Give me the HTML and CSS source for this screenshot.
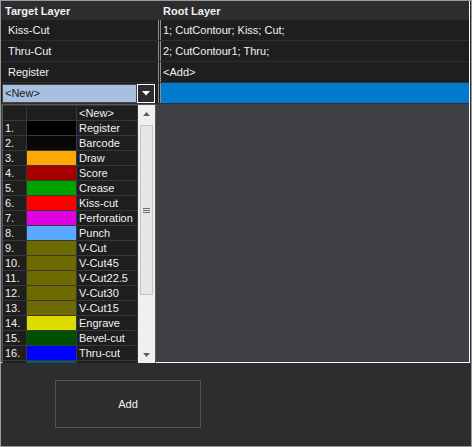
FILE: index.html
```html
<!DOCTYPE html>
<html>
<head>
<meta charset="utf-8">
<link rel="stylesheet" href="styles.css">
</head>
<body>
<div class="window">
  <div class="grid">
    <div class="row header">
      <div class="c1">Target Layer</div>
      <div class="c2">Root Layer</div>
    </div>
    <div class="row">
      <div class="c1">Kiss-Cut</div>
      <div class="c2">1; CutContour; Kiss; Cut;</div>
    </div>
    <div class="row">
      <div class="c1">Thru-Cut</div>
      <div class="c2">2; CutContour1; Thru;</div>
    </div>
    <div class="row">
      <div class="c1">Register</div>
      <div class="c2">&lt;Add&gt;</div>
    </div>
    <div class="row new">
      <div class="c1">
        <div class="combo">
          <div class="combo-field">&lt;New&gt;</div>
          <div class="combo-btn"><svg width="8" height="5" viewBox="0 0 8 5"><polygon points="0,0 8,0 4,4.5" fill="#ffffff"/></svg></div>
        </div>
      </div>
      <div class="c2 selected"></div>
    </div>

    <div class="dropdown">
      <div class="items">
        <div class="item"><div class="num"></div><div class="sw"></div><div class="name">&lt;New&gt;</div></div>
        <div class="item"><div class="num">1.</div><div class="sw c-register"></div><div class="name">Register</div></div>
        <div class="item"><div class="num">2.</div><div class="sw c-barcode"></div><div class="name">Barcode</div></div>
        <div class="item"><div class="num">3.</div><div class="sw c-draw"></div><div class="name">Draw</div></div>
        <div class="item"><div class="num">4.</div><div class="sw c-score"></div><div class="name">Score</div></div>
        <div class="item"><div class="num">5.</div><div class="sw c-crease"></div><div class="name">Crease</div></div>
        <div class="item"><div class="num">6.</div><div class="sw c-kiss"></div><div class="name">Kiss-cut</div></div>
        <div class="item"><div class="num">7.</div><div class="sw c-perf"></div><div class="name">Perforation</div></div>
        <div class="item"><div class="num">8.</div><div class="sw c-punch"></div><div class="name">Punch</div></div>
        <div class="item"><div class="num">9.</div><div class="sw c-vcut"></div><div class="name">V-Cut</div></div>
        <div class="item"><div class="num">10.</div><div class="sw c-vcut"></div><div class="name">V-Cut45</div></div>
        <div class="item"><div class="num">11.</div><div class="sw c-vcut"></div><div class="name">V-Cut22.5</div></div>
        <div class="item"><div class="num">12.</div><div class="sw c-vcut"></div><div class="name">V-Cut30</div></div>
        <div class="item"><div class="num">13.</div><div class="sw c-vcut"></div><div class="name">V-Cut15</div></div>
        <div class="item"><div class="num">14.</div><div class="sw c-engrave"></div><div class="name">Engrave</div></div>
        <div class="item"><div class="num">15.</div><div class="sw c-bevel"></div><div class="name">Bevel-cut</div></div>
        <div class="item"><div class="num">16.</div><div class="sw c-thru"></div><div class="name">Thru-cut</div></div>
        <div class="item"><div class="num"></div><div class="sw c-17"></div><div class="name"></div></div>
      </div>
      <div class="scroll">
        <div class="arrow"><svg width="7" height="4" viewBox="0 0 7 4"><polygon points="3.5,0 7,4 0,4" fill="#606060"/></svg></div>
        <div class="thumb"><svg width="7" height="5" viewBox="0 0 7 5"><rect x="0" y="0" width="7" height="1" fill="#6d6d6d"/><rect x="0" y="2" width="7" height="1" fill="#6d6d6d"/><rect x="0" y="4" width="7" height="1" fill="#6d6d6d"/></svg></div>
        <div class="arrow bottom"><svg width="7" height="4" viewBox="0 0 7 4"><polygon points="0,0 7,0 3.5,4" fill="#606060"/></svg></div>
      </div>
    </div>
  </div>
  <div class="footer">
    <button class="add">Add</button>
  </div>
</div>
</body>
</html>
```

FILE: styles.css
```css
* { box-sizing: border-box; }

body {
  margin: 0;
  background: #2d2d30;
  font-family: "Liberation Sans", Arial, sans-serif;
  font-size: 11px;
  color: #f1f1f1;
}

.window {
  width: 472px;
  height: 447px;
  border: 1px solid #9a9a9a;
  background: #2d2d30;
  display: flex;
  flex-direction: column;
}

.grid {
  position: relative;
  flex: none;
  height: 362px;
  margin-right: 1px;
  background: #3f3f46;
  border-right: 1px solid #ffffff;
  border-bottom: 1px solid #ffffff;
}

.row {
  display: flex;
  height: 21px;
  background: #1e1e1e;
  border-bottom: 1px solid #2f2f2f;
}

.row.header {
  height: 19px;
  background: #2d2d30;
  border-bottom: none;
  font-weight: bold;
  font-size: 11px;
}

.c1 {
  width: 158px;
  padding-left: 7px;
  display: flex;
  align-items: center;
  border-right: 1px solid #8d8d8d;
}

.c2 {
  flex: 1;
  margin-left: 1px;
  padding-left: 2px;
  display: flex;
  align-items: center;
  border-left: 1px solid #8d8d8d;
}

.header .c1 {
  padding-left: 4px;
  border-right-color: transparent;
}

.header .c2 {
  border-left-color: transparent;
}

.new .c1 {
  padding-left: 0;
  align-items: flex-start;
}

.selected {
  background: #007acc;
}

.combo {
  display: flex;
  margin: 1px 0 0 1px;
  width: 153px;
  height: 19px;
}

.combo-field {
  flex: 1;
  background: #a8c0df;
  border: 1px solid #454545;
  color: #1b1b1b;
  padding-left: 2px;
  line-height: 16px;
}

.combo-btn {
  width: 18px;
  border: 1px solid #ffffff;
  background: #2d2d30;
  display: flex;
  align-items: center;
  justify-content: center;
}

.dropdown {
  position: absolute;
  left: 1px;
  top: 103px;
  width: 154px;
  height: 259px;
  display: flex;
  overflow: hidden;
  z-index: 2;
  background: #1e1e1e;
  border-left: 1px solid #5a5a5a;
  border-top: 1px solid #5a5a5a;
  border-right: 1px solid #5a5a5a;
}

.items {
  width: 135px;
  overflow: hidden;
}

.item {
  display: flex;
  height: 15px;
  border-top: 1px solid #383838;
  line-height: 14px;
  color: #f1f1f1;
}

.num {
  width: 24px;
  padding-left: 2px;
  border-right: 1px solid #383838;
}

.sw {
  width: 50px;
  border-right: 1px solid #383838;
}

.name {
  flex: 1;
  padding-left: 2px;
  white-space: nowrap;
  border-right: 1px solid #383838;
}

.c-register { background: #000000; }
.c-barcode { background: #080808; }
.c-draw { background: #ffa800; }
.c-score { background: #a40000; }
.c-crease { background: #00a400; }
.c-kiss { background: #ff0000; }
.c-perf { background: #e000e0; }
.c-punch { background: #58aaff; }
.c-vcut { background: #6e6c00; }
.c-engrave { background: #dcdc00; }
.c-bevel { background: #004f00; }
.c-thru { background: #0000ff; }
.c-17 { background: #005a87; }

.scroll {
  width: 17px;
  background: #f0f0f0;
  display: flex;
  flex-direction: column;
  align-items: center;
}

.arrow {
  height: 17px;
  width: 17px;
  display: flex;
  align-items: center;
  justify-content: center;
  flex: none;
}

.arrow.bottom {
  margin-top: auto;
}

.thumb {
  margin-top: 3px;
  width: 13px;
  height: 170px;
  background: #e6e6e6;
  border: 1px solid #c4c4c4;
  display: flex;
  align-items: center;
  justify-content: center;
  flex: none;
}

.footer {
  flex: 1;
}

.add {
  display: block;
  margin: 17px 0 0 54px;
  width: 146px;
  height: 48px;
  border: 1px solid #555555;
  background: transparent;
  color: #f1f1f1;
  font-family: "Liberation Sans", Arial, sans-serif;
  font-size: 11px;
  padding: 0;
}
```
